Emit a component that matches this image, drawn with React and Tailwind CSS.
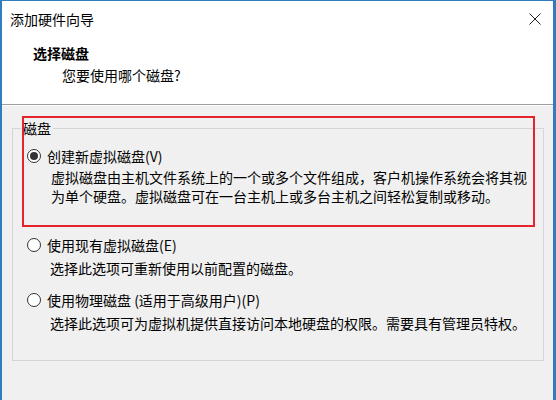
import React from "react";

const font = { fontFamily: '"Noto Sans CJK SC", "Noto Sans", sans-serif' };

function Radio({ checked }) {
  return (
    <span className="flex h-[14px] w-[14px] shrink-0 items-center justify-center rounded-full border border-[#333333] bg-white">
      {checked && <span className="h-[8px] w-[8px] rounded-full bg-[#333333]" />}
    </span>
  );
}

export default function App() {
  return (
    <div
      className="relative h-[400px] w-[556px] overflow-hidden border-l-2 border-r-[3px] border-t border-[#2f7dbf] bg-[#f0f0f0] text-[14px] text-black"
      style={font}
    >
      {/* header */}
      <div className="h-[103px] bg-white">
        <div className="flex h-[35px] items-center justify-between pl-2 pr-[12px]">
          <span className="leading-5">添加硬件向导</span>
          <svg width="12" height="12" viewBox="0 0 12 12" className="mt-[1px]">
            <path d="M0.5 0.5 L11.5 11.5 M11.5 0.5 L0.5 11.5" stroke="#222" strokeWidth="1" fill="none" />
          </svg>
        </div>
        <div className="mt-[7px] pl-[31px] font-bold leading-5">选择磁盘</div>
        <div className="mt-[2px] pl-[60px] leading-5">您要使用哪个磁盘?</div>
      </div>
      <div className="h-px bg-[#a0a0a0]" />
      <div className="h-px bg-white" />

      {/* group box */}
      <fieldset className="mx-[9px] ml-[10px] mt-[12px] border border-[#d5d5d5] pb-[28px]">
        <legend className="ml-[8px] px-[2px] leading-5">磁盘</legend>

        <div className="mt-2 flex items-center gap-[6px] pl-[14px] leading-5">
          <Radio checked />
          <span>创建新虚拟磁盘(V)</span>
        </div>
        <div className="mt-[2px] pl-[38px] leading-[19px]">
          <div>虚拟磁盘由主机文件系统上的一个或多个文件组成，客户机操作系统会将其视</div>
          <div>为单个硬盘。虚拟磁盘可在一台主机上或多台主机之间轻松复制或移动。</div>
        </div>

        <div className="mt-[29px] flex items-center gap-[6px] pl-[14px] leading-5">
          <Radio />
          <span>使用现有虚拟磁盘(E)</span>
        </div>
        <div className="mt-[4px] pl-[37px] leading-[18px]">选择此选项可重新使用以前配置的磁盘。</div>

        <div className="mt-[13px] flex items-center gap-[6px] pl-[14px] leading-5">
          <Radio />
          <span>使用物理磁盘 (适用于高级用户)(P)</span>
        </div>
        <div className="mt-[4px] pl-[37px] leading-[18px]">
          选择此选项可为虚拟机提供直接访问本地硬盘的权限。需要具有管理员特权。
        </div>
      </fieldset>

      {/* red annotation box */}
      <div className="pointer-events-none absolute left-[20px] top-[115px] h-[111px] w-[513px] border-2 border-[#e3242b]" />
    </div>
  );
}
